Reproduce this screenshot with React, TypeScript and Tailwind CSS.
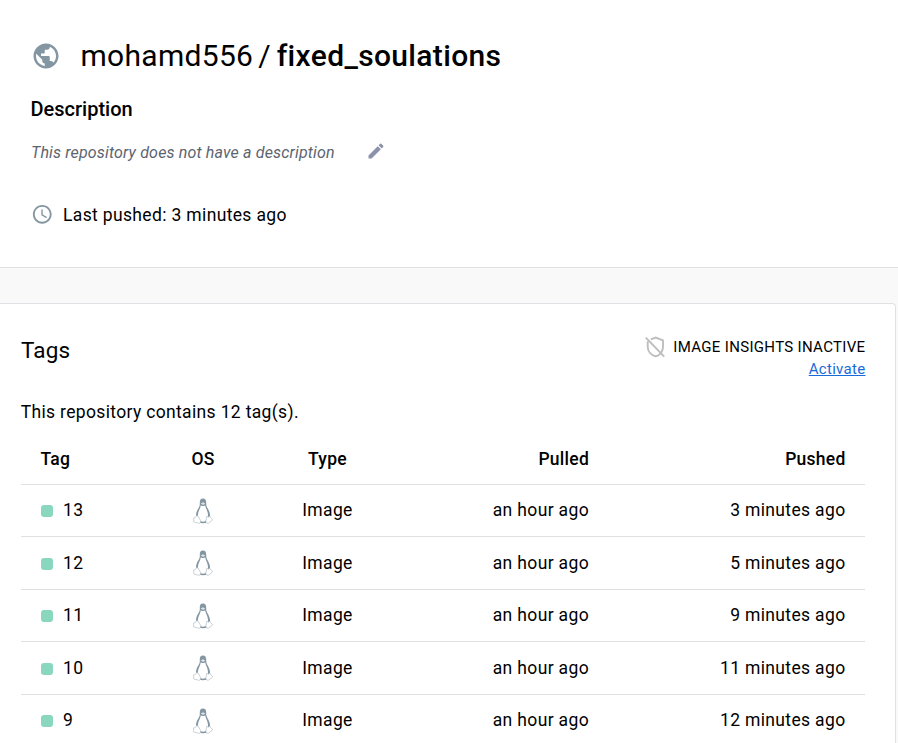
import React from "react";

const rows = [
  { tag: "13", pulled: "an hour ago", pushed: "3 minutes ago", height: "h-[52px]", nudge: "pt-px", labelNudge: "pt-px" },
  { tag: "12", pulled: "an hour ago", pushed: "5 minutes ago", height: "h-[53px]", nudge: "pt-px", labelNudge: "pt-[2px]" },
  { tag: "11", pulled: "an hour ago", pushed: "9 minutes ago", height: "h-[52px]", nudge: "pt-px", labelNudge: "pt-px" },
  { tag: "10", pulled: "an hour ago", pushed: "11 minutes ago", height: "h-[53px]", nudge: "pt-px", labelNudge: "pt-[2px]" },
  { tag: "9", pulled: "an hour ago", pushed: "12 minutes ago", height: "h-[52px]", nudge: "pt-0", labelNudge: "pt-px" },
];

function Globe() {
  return (
    <svg viewBox="0 0 24 24" className="size-[30px] fill-[#8496a2]">
      <path d="M12 2C6.48 2 2 6.48 2 12s4.48 10 10 10 10-4.48 10-10S17.52 2 12 2zm-1 17.93c-3.95-.49-7-3.85-7-7.93 0-.62.08-1.21.21-1.79L9 15v1c0 1.1.9 2 2 2v1.93zm6.9-2.54c-.26-.81-1-1.39-1.9-1.39h-1v-3c0-.55-.45-1-1-1H8v-2h2c.55 0 1-.45 1-1V7h2c1.1 0 2-.9 2-2v-.41c2.93 1.19 5 4.06 5 7.41 0 2.08-.8 3.97-2.1 5.39z" />
    </svg>
  );
}

function Pencil() {
  return (
    <svg viewBox="0 0 24 24" className="mb-[2px] size-5 fill-[#8b92a9]">
      <path d="M3 17.25V21h3.75L17.81 9.94l-3.75-3.75L3 17.25zM20.71 7.04c.39-.39.39-1.02 0-1.41l-2.34-2.34a.996.996 0 0 0-1.41 0l-1.83 1.83 3.75 3.75 1.83-1.83z" />
    </svg>
  );
}

function Clock() {
  return (
    <svg viewBox="0 0 24 24" className="mb-px size-[22.5px] fill-[#8496a2]">
      <path d="M11.99 2C6.47 2 2 6.48 2 12s4.47 10 9.99 10C17.52 22 22 17.52 22 12S17.52 2 11.99 2zM12 20c-4.42 0-8-3.58-8-8s3.58-8 8-8 8 3.58 8 8-3.58 8-8 8zm.5-13H11v6l5.25 3.15.75-1.23-4.5-2.67z" />
    </svg>
  );
}

function ShieldOff() {
  return (
    <svg viewBox="0 0 20 22" className="h-[22px] w-5 fill-none stroke-[#bdbdbd]" strokeWidth="1.9">
      <path d="M5.8 3.4 10.7 1.5 18 4.3v6.2c0 2.3-.6 4.3-1.7 6M2.7 5.2v5.3c0 5 3.4 8.7 8 9.8 1.8-.4 3.3-1.3 4.5-2.5M.8 1.7l18.4 18.9" />
    </svg>
  );
}

function Penguin() {
  return (
    <svg viewBox="0 0 20 26" className="h-[26px] w-5">
      <path d="M10 .6C7.700 .6 6.700 2 6.800 4.500 6.900 7.300 6.700 8.300 5.300 10.500 3.700 13 2.800 15.300 3 18.500L5.500 24.500Q10 26 14.500 24.500L17 18.500C17.300 15.500 16 12.700 14.700 10.500 13.400 8.400 13.200 7.500 13.200 4.500 13.200 1.900 12.100 .6 10 .6Z" fill="#8496a2" />
      <path d="M7.800 7.200Q10 9 12.100 7.200C12.400 9.700 14.800 12.900 15 16.700 15.100 20.500 13.300 23.700 10 23.700 6.700 23.700 4.700 20.300 4.900 16.700 5.100 13.200 7.400 10.500 7.800 7.200Z" fill="white" />
      <path d="M7.700 5.500 10 4.300 12.300 5.500 10.100 7.100Z" fill="#dce2e6" />
      <path d="M3.500 17.500 5 18 7.600 22.400Q8.200 24.600 6.400 25.200 5.400 25.400 4.500 24.900L.8 24Q.3 23.500.7 22.500L.6 20.100 2.400 19.400ZM13.700 18.300Q15.200 20 16.900 18.100L17.700 19.800 19.500 21.400Q19.600 22.400 18 23.300L15.500 25.100Q13.200 25.700 12.800 23.800Z" fill="white" stroke="#aab6be" strokeWidth=".6" />
    </svg>
  );
}

function RepositoryHeader() {
  return (
    <header className="h-[268px] border-b border-[#dddfe2] bg-white pt-[36px] pl-[31px]">
      <div className="flex h-10 items-center">
        <Globe />
        <h1 className="ml-[19.5px] flex text-[30px] leading-10 font-normal whitespace-pre">
          <span className="tracking-[0.3px]">mohamd556</span>
          <span className="ml-[5px]">/</span>
          <span className="ml-[6px] font-medium tracking-[0.34px]">fixed_soulations</span>
        </h1>
      </div>
      <h2 className="-ml-[0.5px] mt-[18px] text-[20px] leading-[30px] font-medium">Description</h2>
      <div className="mt-[17px] flex h-[22px] items-center">
        <p className="w-[335px] pt-[2px] text-[16px] tracking-[0.16px] text-[#5c6470] italic">This repository does not have a description</p>
        <Pencil />
      </div>
      <div className="mt-[40px] flex h-[24px] items-center">
        <Clock />
        <span className="ml-[9.5px] text-[17.5px] tracking-[0.35px]">Last pushed: 3 minutes ago</span>
      </div>
    </header>
  );
}

export default function App() {
  return (
    <div className="h-[743px] overflow-hidden bg-[#f9f9f9] font-[Roboto,sans-serif] text-black">
      <RepositoryHeader />
      <main className="mt-[35px] h-[600px] w-[896px] rounded-tr-[4px] border-t border-r border-[#e0e1e4] bg-white pr-[30px] pl-[21px]">
        <div className="flex justify-between pt-[31px]">
          <h2 className="text-[22.5px] leading-[30px] tracking-[0.15px]">Tags</h2>
          <div className="flex flex-col items-end">
            <div className="flex h-[23px] items-center">
              <ShieldOff />
              <span className="-mr-[0.4px] ml-2 pt-[2px] text-[15px] tracking-[0.32px]">IMAGE INSIGHTS INACTIVE</span>
            </div>
            <a className="-mr-[0.5px] text-[15px] leading-[22px] tracking-[0.3px] text-[#1a6ad9] underline" href="#activate">Activate</a>
          </div>
        </div>
        <p className="-ml-[0.3px] mt-[19px] h-[26px] text-[17.5px] leading-[26px] tracking-[0.34px]">This repository contains 12 tag(s).</p>
        <table className="mt-[8px] w-[844px] table-fixed border-collapse text-[17.5px] tracking-[0.35px]">
          <colgroup>
            <col className="w-[131px]" />
            <col className="w-[102px]" />
            <col className="w-[147px]" />
            <col className="w-[188px]" />
            <col className="w-[276px]" />
          </colgroup>
          <thead>
            <tr className="h-[51px] border-b border-[#e0e0e0] tracking-[0.25px]">
              <th className="pt-px pl-[19.5px] text-left font-medium">Tag</th>
              <th className="pt-px text-center font-medium">OS</th>
              <th className="pt-px text-center font-medium">Type</th>
              <th className="pt-px text-right font-medium">Pulled</th>
              <th className="pt-px pr-[19.5px] text-right font-medium">Pushed</th>
            </tr>
          </thead>
          <tbody>
            {rows.map((row) => (
              <tr key={row.tag} className={`${row.height} border-b border-[#e0e0e0]`}>
                <td className="pl-5">
                  <div className="flex items-center">
                    <span className="mt-[2px] size-3 rounded-[3px] bg-[#89d7be]" />
                    <span className={`ml-[10px] ${row.labelNudge}`}>{row.tag}</span>
                  </div>
                </td>
                <td className="pt-px"><div className="flex justify-center"><Penguin /></div></td>
                <td className={`${row.nudge} text-center`}>Image</td>
                <td className={`${row.nudge} text-right`}>{row.pulled}</td>
                <td className={`${row.nudge} pr-[19.5px] text-right`}>{row.pushed}</td>
              </tr>
            ))}
          </tbody>
        </table>
      </main>
    </div>
  );
}
